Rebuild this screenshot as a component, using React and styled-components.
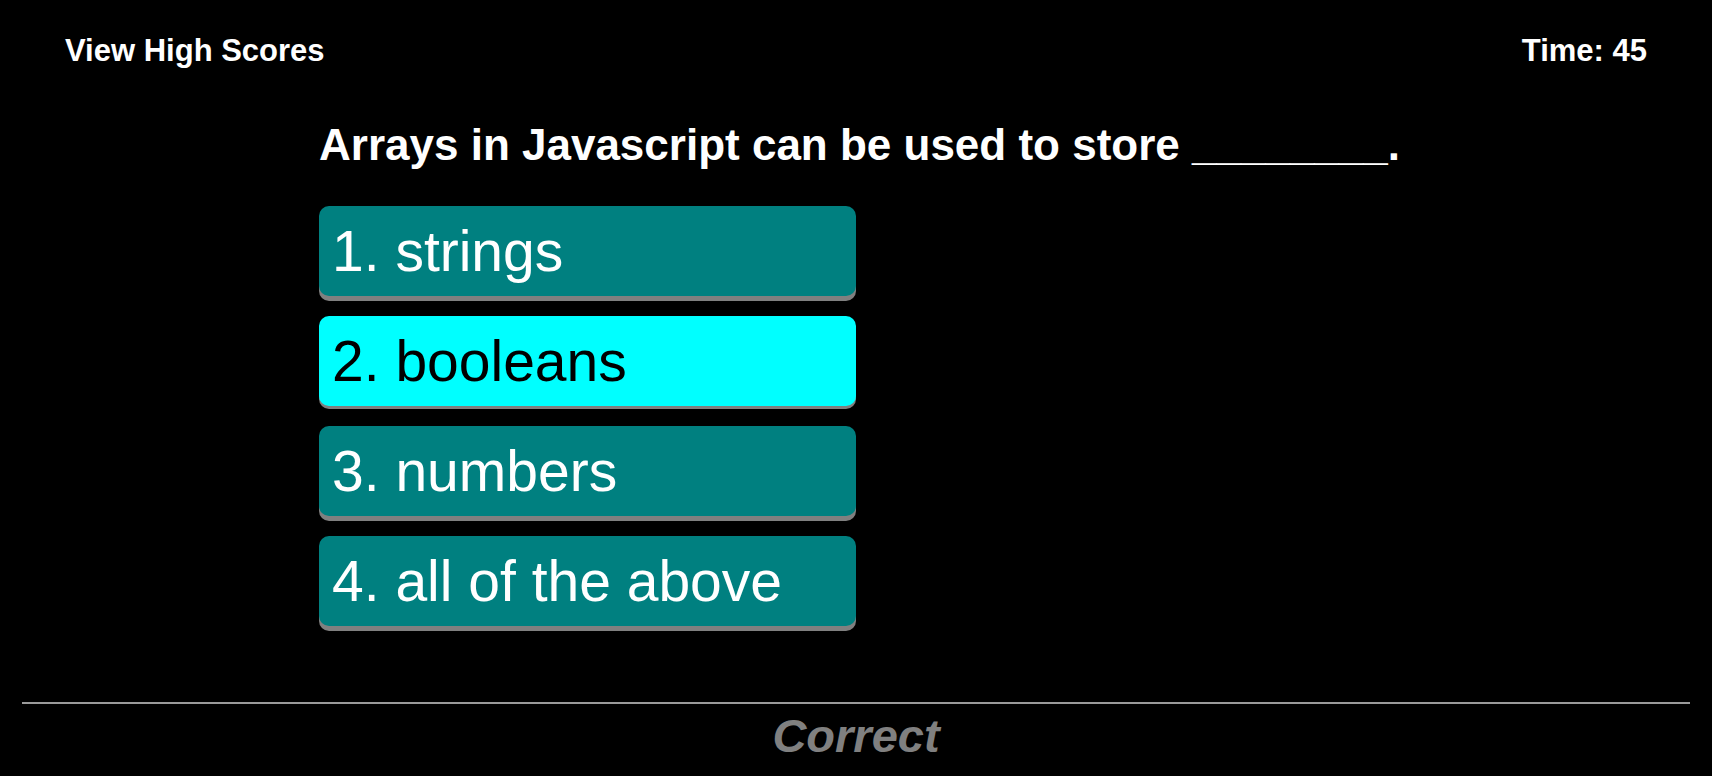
import React from 'react';
import styled, { createGlobalStyle } from 'styled-components';

const GlobalStyle = createGlobalStyle`
    html, body {
        margin: 0;
        padding: 0;
        background: #000;
        color: #fff;
        font-family: "Liberation Sans", Arial, sans-serif;
    }
`;

const choices = ['strings', 'booleans', 'numbers', 'all of the above'];

function App() {
    const active = 1;
    return (
        <Page>
            <GlobalStyle />
            <Header>
                <HeaderLink>View High Scores</HeaderLink>
                <Timer>Time: 45</Timer>
            </Header>
            <Quiz>
                <Question>Arrays in Javascript can be used to store ________.</Question>
                <Choices>
                    {choices.map((c, i) => (
                        <Choice key={c} active={i === active ? 1 : 0}>
                            {i + 1}. {c}
                        </Choice>
                    ))}
                </Choices>
            </Quiz>
            <Feedback>
                <Result>Correct</Result>
            </Feedback>
        </Page>
    );
}

const Page = styled.div`
    min-height: 776px;
    background: #000;
`;

const Header = styled.header`
    display: flex;
    justify-content: space-between;
    align-items: center;
    padding: 33px 65px 0 65px;
    font-size: 31px;
    font-weight: bold;
`;

const HeaderLink = styled.span`
    color: #fff;
    cursor: pointer;
`;

const Timer = styled.span`
    color: #fff;
`;

const Quiz = styled.main`
    width: 1074px;
    margin: 51px auto 0;
`;

const Question = styled.h2`
    margin: 0;
    font-size: 44px;
    font-weight: bold;
    white-space: nowrap;
`;

const Choices = styled.div`
    display: flex;
    flex-direction: column;
    gap: 20px;
    margin-top: 36px;
    width: 537px;
`;

const Choice = styled.button`
    display: block;
    height: 90px;
    padding: 0 13px;
    border: none;
    border-radius: 10px;
    text-align: left;
    font-family: "Liberation Sans", Arial, sans-serif;
    font-size: 57px;
    line-height: normal;
    background: ${p => (p.active ? '#00ffff' : '#008080')};
    color: ${p => (p.active ? '#000' : '#fff')};
    box-shadow: 0 ${p => (p.active ? '3px' : '5px')} 0 #808080;
    cursor: pointer;
`;

const Feedback = styled.footer`
    margin: 76px 22px 0;
    border-top: 2px solid #9a9a9a;
    text-align: center;
`;

const Result = styled.p`
    margin: 4px 0 0;
    font-size: 47px;
    font-weight: bold;
    font-style: italic;
    color: #808080;
`;

export default App;
